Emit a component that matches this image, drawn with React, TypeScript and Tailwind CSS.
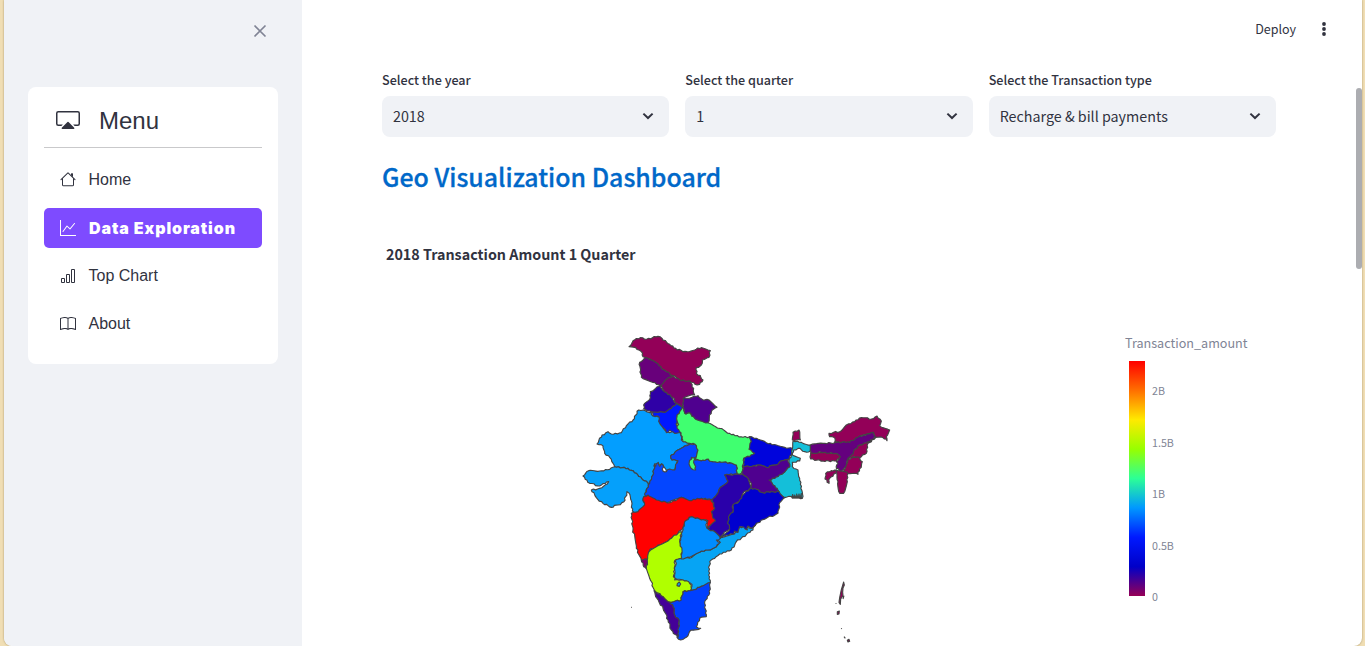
import React from "react";
import { BsBarChart, BsBook, BsCast, BsGraphUp } from "react-icons/bs";

type Region = { name: string; fill: string; points: string };

// Outlines in map units; three units make one pixel.
const regions: Region[] = [
  { name: "Rajasthan", fill: "#039eff", points: "207,255 227,257 245,263 250,273 268,275 275,290 285,315 300,323 315,315 333,320 335,345 360,355 345,363 315,383 303,393 307,405 325,407 315,435 290,440 280,420 255,417 250,450 240,475 220,465 200,445 175,430 135,425 125,403 105,385 100,363 82,357 97,330 115,320 125,327 155,323 175,297 187,290" },
  { name: "Gujarat", fill: "#05a0fb", points: "40,453 57,437 90,438 120,433 135,425 175,430 200,445 220,465 240,475 232,490 228,512 220,525 225,540 210,557 195,563 188,558 187,535 182,515 172,500 168,515 163,530 145,540 125,547 100,535 80,518 65,495 90,490 113,477 117,470 90,483 60,475" },
  { name: "Madhya Pradesh", fill: "#0446ff", points: "303,393 315,383 345,363 375,357 385,375 378,405 395,407 410,403 430,410 450,410 480,413 500,420 503,447 465,450 475,468 450,490 440,512 430,525 395,520 360,530 335,517 305,527 290,533 260,527 240,523 225,510 232,490 240,475 250,450 255,417 258,424 266,412 270,424 276,416 280,420 280,438 290,440 300,432 315,435 318,418 325,407 307,405" },
  { name: "Haryana", fill: "#0018ff", points: "245,260 265,262 285,262 305,250 320,235 338,247 330,260 322,275 322,295 332,305 332,323 315,325 300,315 290,323 283,310 270,295 268,275 250,272" },
  { name: "Uttar Pradesh", fill: "#40ff70", points: "338,247 348,267 360,263 375,280 415,293 450,310 480,325 520,337 540,335 545,350 540,370 553,385 540,395 522,400 520,430 515,445 503,447 500,420 480,413 450,410 430,410 410,403 395,407 378,405 385,375 375,357 360,355 340,350 338,335 330,320 322,310 322,275 330,260" },
  { name: "Lalitpur", fill: "#40ff70", points: "365,397 377,397 372,413 378,425 378,435 364,430 358,417" },
  { name: "Delhi", fill: "#a0f000", points: "319,296 324,293 327,299 321,302" },
  { name: "Ladakh", fill: "#930058", points: "178,65 190,47 212,38 232,42 265,34 277,40 300,58 318,70 340,80 352,80 375,75 395,68 408,72 422,77 418,97 398,105 395,120 380,128 380,145 392,152 400,165 390,178 382,180 360,168 335,167 310,152 290,140 268,122 245,105 220,95 215,80 198,68" },
  { name: "Jammu & Kashmir", fill: "#68007b", points: "210,112 228,97 245,105 268,122 290,140 308,153 298,158 285,168 272,182 250,172 215,157 212,130" },
  { name: "Punjab", fill: "#2f00a6", points: "272,182 285,200 305,215 320,235 305,250 285,262 265,262 245,260 222,252 225,235 242,218 242,200 258,190" },
  { name: "Himachal Pradesh", fill: "#7b006b", points: "274,182 285,168 308,153 335,167 360,168 372,190 375,210 345,217 338,245 325,237 305,215 285,200" },
  { name: "Uttarakhand", fill: "#4f008f", points: "342,218 365,218 385,212 400,225 418,225 442,247 425,260 415,293 390,287 375,280 360,263 345,265 340,245" },
  { name: "Bihar", fill: "#0004dc", points: "540,335 560,340 590,353 620,360 645,367 668,370 665,390 655,405 635,407 620,420 590,427 565,420 540,427 520,428 523,400 540,395 555,385 538,373 545,350" },
  { name: "West Bengal", fill: "#14bfd9", points: "670,348 695,352 722,360 722,378 705,380 685,370 672,375 668,390 692,400 690,408 668,412 668,425 685,435 690,460 698,502 698,520 665,515 645,518 628,500 610,480 598,465 615,460 640,445 660,425 658,405 665,390 668,372" },
  { name: "Jharkhand", fill: "#4f008f", points: "520,425 540,425 565,420 590,427 620,420 635,407 655,403 660,425 640,445 615,460 598,465 610,480 625,495 628,500 595,500 585,505 560,493 540,495 545,475 535,460 518,447" },
  { name: "Andhra Pradesh", fill: "#06a4f4", points: "560,595 550,615 500,650 485,675 450,687 435,700 420,710 417,750 422,772 415,777 390,787 365,797 367,778 340,767 315,760 315,735 320,715 320,700 360,700 390,682 415,675 440,665 450,650 440,640 460,637 495,625 510,605 545,610" },
  { name: "Chhattisgarh", fill: "#2a00aa", points: "505,447 518,447 535,460 545,487 520,505 510,530 490,540 488,565 480,570 475,590 480,612 460,628 452,640 435,620 412,610 422,600 428,580 425,560 435,550 428,523 440,510 450,490 475,468 465,450" },
  { name: "Odisha", fill: "#0000cf", points: "545,490 560,493 585,505 595,500 628,500 645,518 630,533 625,565 590,580 560,595 545,610 535,603 533,615 522,606 510,605 505,622 495,618 495,627 470,630 452,640 480,612 475,590 480,570 490,562 490,540 508,530 522,508" },
  { name: "Maharashtra", fill: "#ff0000", points: "222,515 235,510 260,525 300,533 335,517 360,527 395,520 425,523 435,550 425,560 430,580 437,588 412,612 415,587 395,585 365,575 350,587 340,610 325,625 300,643 270,660 240,675 232,703 215,705 200,670 190,615 185,565 205,560 225,540 220,527" },
  { name: "Telangana", fill: "#008cff", points: "365,575 395,585 410,587 412,610 435,620 452,640 440,645 452,652 440,665 415,675 390,682 360,697 335,702 335,675 330,650 338,620 345,590" },
  { name: "Karnataka", fill: "#b0ff00", points: "335,620 330,650 337,675 335,700 315,707 315,735 312,750 315,765 335,765 350,767 365,780 362,797 340,800 335,825 300,832 280,815 255,797 240,760 230,730 234,700 240,678 270,660 300,643 325,625" },
  { name: "Goa", fill: "#7b006b", points: "215,705 232,703 230,732 222,725" },
  { name: "Tamil Nadu", fill: "#0040ff", points: "300,832 335,825 340,800 362,797 390,787 422,773 420,805 405,830 410,875 390,880 380,905 393,910 365,915 350,937 333,945 322,937 328,885 315,870 310,845" },
  { name: "Kerala", fill: "#440098", points: "253,797 280,815 300,832 310,845 315,870 328,885 325,937 305,915 295,885 280,850 262,820" },
  { name: "Sikkim", fill: "#930058", points: "670,322 688,315 692,345 668,345" },
  { name: "Arunachal Pradesh", fill: "#930058", points: "778,325 792,322 810,320 830,300 855,290 875,278 905,282 922,273 935,288 930,302 960,315 950,335 952,347 940,338 918,337 912,322 860,338 840,352 795,352 795,338 780,335" },
  { name: "Nagaland", fill: "#930058", points: "918,338 895,355 890,385 870,398 850,395 833,405 845,385 865,362 895,350" },
  { name: "Manipur", fill: "#930058", points: "835,402 865,395 878,410 865,448 830,443 822,435 830,418" },
  { name: "Tripura", fill: "#930058", points: "800,435 798,445 780,460 778,475 766,462 768,445 785,437" },
  { name: "Mizoram", fill: "#930058", points: "800,435 815,438 835,445 833,470 822,505 810,505 805,470 802,450" },
  { name: "Meghalaya", fill: "#930058", points: "723,383 795,383 813,395 800,408 760,408 723,402" },
  { name: "Assam", fill: "#64007e", points: "722,360 760,355 795,353 840,352 860,338 910,322 918,335 895,350 865,362 845,390 833,405 828,425 815,438 800,430 805,415 800,410 812,395 797,385 760,383 725,383" },
];

// Gives every border a fine jagged line; both sides of a shared edge get the same one.
function roughen(points: string) {
  const list = points.split(" ").map((p) => p.split(",").map(Number));
  const out: string[] = [];
  list.forEach((a, i) => {
    const b = list[(i + 1) % list.length];
    const flip = a[0] > b[0] || (a[0] === b[0] && a[1] > b[1]);
    const [s, e] = flip ? [b, a] : [a, b];
    const dx = e[0] - s[0];
    const dy = e[1] - s[1];
    const len = Math.hypot(dx, dy);
    const n = Math.max(1, Math.round(len / 6));
    const mid: string[] = [];
    for (let k = 1; k < n; k++) {
      const h = Math.sin(s[0] * 12.9 + s[1] * 78.2 + e[0] * 3.7 + k * 37.7) * 43758.5;
      const off = (h - Math.floor(h) - 0.5) * 5;
      const x = s[0] + (dx * k) / n - (dy / len) * off;
      const y = s[1] + (dy * k) / n + (dx / len) * off;
      mid.push(`${x.toFixed(1)},${y.toFixed(1)}`);
    }
    if (flip) mid.reverse();
    out.push(`${a[0]},${a[1]}`, ...mid);
  });
  return out.join(" ");
}

function IndiaMap() {
  return (
    <svg viewBox="1 0 1020 963" className="block h-[321px] w-[340px] shrink-0" stroke="#444" strokeWidth="3.4" strokeLinejoin="round">
      {regions.map((r) => (
        <polygon key={r.name} fill={r.fill} points={roughen(r.points)} />
      ))}
      <path d="M666 516l3-9 3 9 3-7 4 8 2-11 4 10 3-10 3 10 4-12 2 16h-30z" fill="#444" strokeWidth="2" />
      <path d="M323 776l6-5 4 6-4 7-7-2z" fill="#06a4f4" />
      <g fill="#930058">
        <path d="M822 771l2 9-4 9-1 13 1 10-7 10-1 16-4-6 2-14 2-10 3-14 3-10zM823 812l-3 10M799 835v2" />
        <path d="M803 860l6-2-1 9-5 1z" />
        <path d="M815 910l1 2M823 935l4 5M833 946l5-3 2 6-5 2z" />
      </g>
      <path d="M184 847h2" />
    </svg>
  );
}

function HouseIcon({ className }: { className?: string }) {
  return (
    <svg viewBox="0 0.8 16 16" fill="currentColor" className={className}>
      <path fillRule="evenodd" d="M2 13.5V7h1v6.5a.5.5 0 0 0 .5.5h9a.5.5 0 0 0 .5-.5V7h1v6.5a1.5 1.5 0 0 1-1.5 1.5h-9A1.5 1.5 0 0 1 2 13.5zm11-11V6l-2-2V2.5a.5.5 0 0 1 .5-.5h1a.5.5 0 0 1 .5.5z" />
      <path fillRule="evenodd" d="M7.293 1.5a1 1 0 0 1 1.414 0l6.647 6.646a.5.5 0 0 1-.708.708L8 2.207 1.354 8.854a.5.5 0 1 1-.708-.708L7.293 1.5z" />
    </svg>
  );
}

const menu = [
  { label: "Home", Icon: HouseIcon },
  { label: "Data Exploration", Icon: BsGraphUp, active: true },
  { label: "Top Chart", Icon: BsBarChart },
  { label: "About", Icon: BsBook },
];

function Sidebar() {
  return (
    <aside className="flex w-[298px] shrink-0 flex-col rounded-bl-lg bg-[#f0f2f6] px-6 pt-[23px]">
      <svg viewBox="0 0 16 16" className="mr-[10px] h-4 w-4 self-end" stroke="#808495" strokeWidth="1.7" fill="none">
        <path d="M2.5 2.5l11 11M13.5 2.5l-11 11" />
      </svg>
      <nav className="mt-12 h-[277px] w-[250px] rounded-lg bg-white px-4 pt-4 font-['Liberation_Sans',sans-serif] text-[#31333f]">
        <div className="flex h-[45px] items-start border-b border-[#c9c9cb] pl-3">
          <BsCast className="mt-[5px] h-6 w-6" />
          <span className="ml-[19px] text-2xl leading-9">Menu</span>
        </div>
        <ul className="mt-3 flex flex-col gap-2">
          {menu.map(({ label, Icon, active }) => (
            <li
              key={label}
              className={
                active
                  ? "flex h-10 items-center rounded-[5px] bg-[#7e4bff] pl-4 text-white"
                  : "flex h-10 items-center pl-4"
              }
            >
              <Icon className="h-4 w-4" />
              <span
                className={
                  active
                    ? "ml-[13px] font-['Inter',sans-serif] text-base font-black tracking-[0.9px]"
                    : "ml-[12.5px] text-base"
                }
              >
                {label}
              </span>
            </li>
          ))}
        </ul>
      </nav>
    </aside>
  );
}

function Select({ label, value }: { label: string; value: string }) {
  return (
    <div className="min-w-0 flex-1">
      <div className="h-6 text-[12.6px] leading-5 font-medium">{label}</div>
      <div className="mt-[2px] flex h-[41px] items-center justify-between rounded-lg bg-[#f0f2f6] pr-[15px] pb-px pl-[11px]">
        <span className="text-[14.3px] leading-6">{value}</span>
        <svg viewBox="0 0 12 8" className="h-2 w-3" fill="none" stroke="#31333f" strokeWidth="2">
          <path d="M1.4 1.6L6 6l4.6-4.4" />
        </svg>
      </div>
    </div>
  );
}

function Legend() {
  return (
    <div className="mt-[9px] ml-[215px] w-[140px] text-[#808495]">
      <div className="text-[12.6px] leading-[18px] whitespace-nowrap">Transaction_amount</div>
      <div className="mt-[9px] ml-1 flex">
        <div className="h-[235px] w-4 bg-[linear-gradient(to_top,#960056_0%,#0000c8_12.5%,#0019ff_25%,#0098ff_37.5%,#2cff96_50%,#97ff00_62.5%,#ffea00_75%,#ff6f00_87.5%,#ff0000_100%)]" />
        <div className="mt-[22px] ml-[7px] flex h-[222px] flex-col justify-between text-[10.7px] leading-4">
          <span>2B</span>
          <span>1.5B</span>
          <span>1B</span>
          <span>0.5B</span>
          <span>0</span>
        </div>
      </div>
    </div>
  );
}

export default function App() {
  return (
    <div className="h-[646px] w-full overflow-hidden bg-[#f0deb4] pr-[3px] pl-1 font-['Noto_Sans_CJK_SC',sans-serif] text-[#31333f]">
      <div className="relative flex h-full overflow-hidden rounded-b-lg bg-white shadow-[0_0_2px_rgba(80,60,0,0.5)]">
        <Sidebar />
        <main className="flex min-w-0 flex-1 flex-col">
          <header className="flex h-[58px] items-center justify-end pr-[36px]">
            <span className="text-[12.5px] leading-5">Deploy</span>
            <svg viewBox="0 0 4 14" className="ml-[26px] h-[14px] w-1" fill="#31333f">
              <circle cx="2" cy="2" r="1.9" />
              <circle cx="2" cy="7" r="1.9" />
              <circle cx="2" cy="12" r="1.9" />
            </svg>
          </header>
          <section className="mt-3 ml-20 flex w-[894px] gap-4">
            <Select label="Select the year" value="2018" />
            <Select label="Select the quarter" value="1" />
            <Select label="Select the Transaction type" value="Recharge & bill payments" />
          </section>
          <h1 className="mt-[19px] ml-20 text-[24.9px] leading-10 font-medium text-[#0068c9] [-webkit-text-stroke:0.3px_#0068c9]">
            Geo Visualization Dashboard
          </h1>
          <h2 className="mt-[46px] ml-[84px] text-[14.3px] leading-6 font-bold">2018 Transaction Amount 1 Quarter</h2>
          <div className="mt-[59px] ml-[268px] flex">
            <IndiaMap />
            <Legend />
          </div>
        </main>
        <div className="absolute top-[88px] right-0 h-[181px] w-[6px] rounded-full bg-[#acadb1]" />
      </div>
    </div>
  );
}
